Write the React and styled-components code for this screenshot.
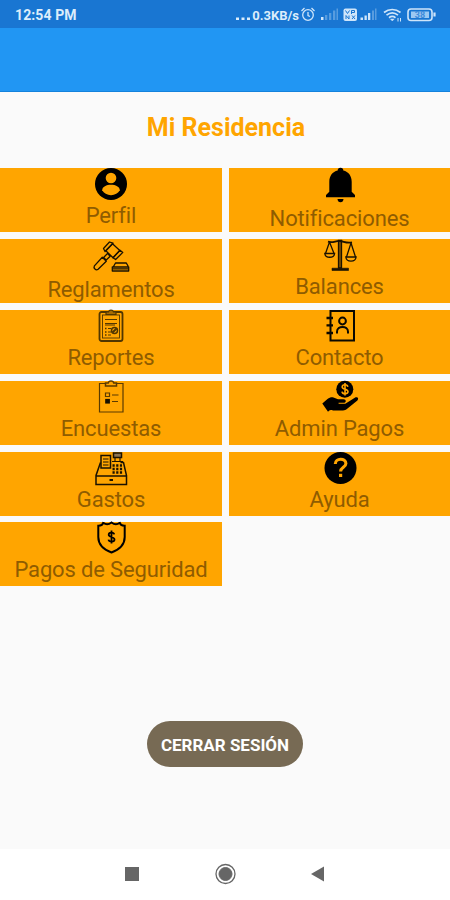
import styled, { createGlobalStyle } from "styled-components";

const GlobalStyle = createGlobalStyle`
  body {
    margin: 0;
    background-color: #fafafa;
    font-family: Roboto, "Liberation Sans", sans-serif;
  }
`;

const Screen = styled.div`
  box-sizing: border-box;
  display: flex;
  flex-direction: column;
  width: 450px;
  height: 900px;
  overflow: hidden;
`;

const StatusBar = styled.header`
  box-sizing: border-box;
  display: flex;
  align-items: center;
  justify-content: space-between;
  height: 28px;
  padding: 2px 13px 0 15px;
  background-color: #1976d2;
  color: #dcedfb;
`;

const Clock = styled.span`
  font-size: 14px;
  font-weight: 700;
  letter-spacing: 0.1px;
`;

const StatusIcons = styled.div`
  display: flex;
  align-items: center;
`;

const NetSpeed = styled.span`
  font-size: 13px;
  font-weight: 700;
`;

const Toolbar = styled.div`
  box-sizing: border-box;
  height: 64px;
  background-color: #2196f3;
  border-bottom: 1px solid #1482dc;
`;

const Title = styled.h1`
  margin: 20px 0 24px;
  padding-left: 2px;
  color: #ffa500;
  font-size: 25px;
  font-weight: 700;
  line-height: 32px;
  text-align: center;
`;

const Grid = styled.main`
  display: grid;
  grid-template-columns: 222px 221px;
  grid-auto-rows: 64px;
  gap: 6.9px 7px;
`;

const Tile = styled.button`
  display: flex;
  flex-direction: column;
  align-items: center;
  padding: 0;
  border: none;
  background-color: #ffa500;
  font-family: inherit;
`;

const TileIcon = styled.svg`
  flex: none;
  display: block;
  width: 40px;
  height: ${(props) => (props.$tall ? "37px" : "34px")};
  fill: none;
  stroke: #1a1200;
  stroke-width: 1.5;
  overflow: visible;
`;

const TileLabel = styled.span`
  color: #8f5c00;
  font-size: 22px;
  line-height: 27px;
  letter-spacing: -0.15px;
  white-space: nowrap;
`;

const Actions = styled.div`
  display: flex;
  justify-content: center;
  margin-top: 134.5px;
`;

const LogoutButton = styled.button`
  width: 156px;
  height: 46px;
  padding: 2px 0 0;
  border: none;
  border-radius: 23px;
  background-color: #776a54;
  color: #ffffff;
  font-family: inherit;
  font-size: 17px;
  font-weight: 700;
  white-space: nowrap;
`;

const NavBar = styled.footer`
  display: flex;
  align-items: center;
  justify-content: space-between;
  box-sizing: border-box;
  height: 51px;
  margin-top: auto;
  padding: 0 125px 2px;
  background-color: #ffffff;
`;

const IconProfile = () => (
  <g fill="#ffa500" stroke="none">
    <circle cx="20" cy="16" r="16" fill="#000" />
    <circle cx="20" cy="10" r="5.3" />
    <path d="M11.2 22.3c0-3.8 4.4-5.6 8.8-5.6s8.8 1.8 8.8 5.6c-1.5 3-5 4.9-8.8 4.9s-7.300-1.900-8.800-4.900Z" />
  </g>
);

const IconBell = () => (
  <g fill="#000" stroke="none">
    <path d="M17.7 2.5a2.8 2.8 0 0 1 5.6 0c5.2 1.200 8.400 5.400 8.400 11.200v10l3.300 3.200v2.300H6v-2.300l3.300-3.200v-10c0-5.800 3.200-10 8.400-11.200Z" />
    <path d="M17.500 31h6c0 2-1.300 3.300-3 3.300s-3-1.300-3-3.300Z" />
  </g>
);

const IconGavel = () => (
  <g strokeWidth="1.3" strokeLinejoin="round">
    <path d="m12.5 9.500 6-6.500 3.500 1.200-8 8.300Z" />
    <path d="m14.800 11.700 6.700-7 7.300 6.800-6.800 7.200Z" />
    <path d="m22 18.700 7-7.500 2.800 2.200-7.200 7.100Z" />
    <path d="m16.500 14.500 2.700 2.700-4 3.800-2.600-2.500Z" />
    <path d="m11.300 18.300 4 3.900-8.200 8.100c-2.200 1.500-5-1-3.700-3.400Z" />
    <path d="M22.500 27.500 24.500 24h10.800l2 3.500M21.300 28h16.400v4H21.300ZM22 29.800h15" />
  </g>
);

const IconScale = () => (
  <g strokeWidth="1.3">
    <path d="M18.500 1.500h3V29h-3Z" fill="#7a4f00" />
    <path d="M12 29.200h16.500v2.300H12Z" fill="#1a1200" strokeWidth=".6" />
    <path d="M8 2.700c5 1.500 8-1.200 12-.7s7 2.600 12 1.300" strokeWidth="1.8" />
    <path d="m9.500 3-4 11.500M9.500 3l4.500 11.500M31 4l-4.500 14M31 4l4.500 14" />
    <path d="M4.800 14.500h9.800c-.5 5-9.300 5-9.800 0ZM25.800 18h10.300c-.6 5.500-9.700 5.500-10.300 0Z" />
  </g>
);

const IconReport = () => (
  <g stroke="#513600" strokeWidth="1.2">
    <rect x="8.5" y="2" width="23" height="29" rx="2" strokeWidth="1.8" />
    <rect x="11.5" y="5" width="17" height="23" strokeWidth=".9" />
    <path d="M15 4.500V2h2.500c.5-2.400 4.500-2.400 5 0H25v2.500Z" fill="#a66b00" />
    <path d="M14 9.500h12M14 13.500h12M14 15h10M17 18.500h3M17 22h3M17 25h3" />
    <path d="M14 18.500h1.500M14 22h1.500M14 25h1.500" strokeWidth="1.6" />
    <circle cx="23.5" cy="20.5" r="3" strokeWidth="1.5" />
    <path d="m21.500 22.500 4-4" strokeWidth="2" />
  </g>
);

const IconSurvey = () => (
  <g stroke="#5b3b00" strokeWidth="1.2">
    <path d="M14.500 2.500h-6V31h23.500V2.500h-6" />
    <path d="M14.500 2v3h11V2h-2.700c-.6-2.700-5-2.700-5.600 0Z" strokeWidth="1.5" />
    <path d="M14.500 12h4v3.500h-4ZM21 14h6.500M21 20.500h6" />
    <rect x="14.8" y="18.5" width="3.5" height="3.5" fill="#1a1200" stroke="#1a1200" />
  </g>
);

const IconContact = () => (
  <g stroke="#0c0900" strokeWidth="2">
    <path d="M10.500 1h23.500v29.500H10.500Z" />
    <path d="M6.500 8H13M6.500 15.300H13M6.500 23H13" strokeWidth="2.3" />
    <circle cx="22.5" cy="11" r="3.4" />
    <path d="M17 23.500v-1.800c0-6.300 11-6.300 11 0v1.800" />
  </g>
);

const IconPayment = () => (
  <g fill="#000" stroke="none">
    <circle cx="24.8" cy="8.3" r="8.5" />
    <path
      d="M27.800 5.800c-.4-2.800-5.600-2.600-5.600.1 0 3 5.800 1.700 5.800 4.700 0 3-5.600 3-6 .1M25 2v12.600"
      fill="none"
      stroke="#ffa500"
      strokeWidth="1.6"
    />
    <path d="M2.300 22.500 7.500 18c2-1.500 4-2 6-1.500l4.500 1.700h5.500c3 0 3 3.600.1 3.600h-5v.9h6.700l9.500-6c2.500-1.500 4.500.8 2.600 2.700l-10.200 8.300c-1.300 1.200-2.500 1.700-4.200 1.700h-10c-1.800-.4-3-.5-4 .4l-1 .9Z" />
  </g>
);

const IconRegister = () => (
  <g strokeWidth="1.5">
    <path d="M9.500 10.500 5 23.500v9h30.500v-9L32.500 10.500h-3M5 24h30.500" />
    <path d="M10 16V3.500h9.500V16Z" />
    <path d="M12 7h5.500M12 10h5.500M12 13h5.500M21 9.500h11M24 6v3.500M29 6v3.500" strokeWidth="1.1" />
    <path d="M22.500 1h8v4.500h-8Z" fill="#8d7550" />
    <path d="M21.500 13.500h9.500M21.500 17h10M21.500 20.500h10" strokeWidth="2.3" strokeDasharray="2.2 1.5" />
    <path d="M18.500 28h3.500" strokeWidth="2" />
  </g>
);

const IconShield = () => (
  <g stroke="#000" strokeWidth="2">
    <path d="M12.500 0C12 2.500 10 3.800 7.300 3.800V15c0 7.500 5.200 12.500 13.200 15.500 8-3 13.200-8 13.200-15.500V3.800C31 3.800 29 2.500 28.500 0M12.500 1c2.500 1.800 5 1.800 8-.5 3 2.300 5.500 2.300 8 .5" />
    <path
      d="M23.200 12.400c-.4-2.500-5.500-2.300-5.500.3 0 2.800 5.800 1.800 5.800 4.700 0 2.800-5.500 2.800-6 .2M20.500 8.500v13"
      strokeWidth="1.8"
    />
  </g>
);

const IconHelp = () => (
  <>
    <circle cx="20.5" cy="16" r="16" fill="#000" stroke="none" />
    <path
      d="M15.300 12c0-6.300 10.600-6.300 10.600-.5 0 3.800-5.300 3.800-5.300 8"
      stroke="#ffa500"
      strokeWidth="3.1"
    />
    <rect x="19" y="21.8" width="3.2" height="3.2" fill="#ffa500" stroke="none" />
  </>
);

const menuItems = [
  { label: "Perfil", Icon: IconProfile },
  { label: "Notificaciones", Icon: IconBell, tall: true },
  { label: "Reglamentos", Icon: IconGavel, tall: true },
  { label: "Balances", Icon: IconScale },
  { label: "Reportes", Icon: IconReport },
  { label: "Contacto", Icon: IconContact },
  { label: "Encuestas", Icon: IconSurvey },
  { label: "Admin Pagos", Icon: IconPayment },
  { label: "Gastos", Icon: IconRegister },
  { label: "Ayuda", Icon: IconHelp },
  { label: "Pagos de Seguridad", Icon: IconShield },
];

const StatusGlyphs = () => (
  <svg width="138" height="20" viewBox="299 5 138 20" fill="none" stroke="#cfe5fa">
    <g strokeWidth="1.3">
      <circle cx="308" cy="15" r="5.3" />
      <path d="M308 12v3.500l2 1M301.500 11l3-3M314.500 11l-3-3" />
    </g>
    <g fill="#cfe5fa" stroke="none">
      <path d="M321 17h2.500v3H321Z" />
      <path d="M325 15h2.300v5H325ZM329 13h2.300v7H329ZM333 10.500h2.300V20H333ZM336.500 8.500h1.500V20h-1.500Z" opacity=".35" />
      <rect x="343.5" y="8.5" width="13.5" height="12.5" rx="2" />
      <path d="M360.500 17.500h2.500V20h-2.500ZM364.500 15.500h2.300V20h-2.300ZM368 13h2.300v7H368Z" />
      <path d="M372 10.500h2V20h-2ZM375 8.500h1.500V20H375Z" opacity=".35" />
    </g>
    <path d="m345.500 10.500 2 3 2-3M351.500 14v-3.500h3v2h-3M346 19v-3.500l3 3.500v-3.500M352 15.500l3 3.500M355 15.500l-3 3.500" stroke="#1976d2" />
    <g strokeWidth="1.7">
      <path d="M384 12.500c5-4 11.500-4 16.500 0M386.500 15.200c3.500-2.800 8-2.800 11.500 0M389 17.700c2-1.500 4.500-1.500 6.500 0" />
      <path d="m390.500 19 1.800 2 1.800-2Z" fill="#cfe5fa" strokeWidth=".5" />
      <path d="M398 18v3.500M400.500 18v3.500" strokeWidth="1" />
    </g>
    <rect x="408" y="9" width="24" height="11.5" rx="3" strokeWidth="1.6" />
    <rect x="411" y="11.5" width="18" height="6.5" fill="#9cc8f2" stroke="none" />
    <path d="M434.500 12.500v4" strokeWidth="2.2" />
    <text x="420" y="18" textAnchor="middle" fontSize="9" fontWeight="700" fill="#3f8bda" stroke="none">
      38
    </text>
  </svg>
);

const App = () => (
  <>
    <GlobalStyle />
    <Screen>
      <StatusBar>
        <Clock>12:54 PM</Clock>
        <StatusIcons>
          <svg width="17" height="16" fill="#dcedfb">
            <path d="M1 10.500h3v2.500H1ZM6.500 10.500h3v2.500h-3ZM12 10.500h3v2.500h-3Z" />
          </svg>
          <NetSpeed>0.3KB/s</NetSpeed>
          <StatusGlyphs />
        </StatusIcons>
      </StatusBar>
      <Toolbar />
      <Title>Mi Residencia</Title>
      <Grid>
        {menuItems.map(({ label, Icon, tall }) => (
          <Tile key={label}>
            <TileIcon $tall={tall} viewBox={tall ? "0 0 40 37" : "0 0 40 34"}>
              <Icon />
            </TileIcon>
            <TileLabel>{label}</TileLabel>
          </Tile>
        ))}
      </Grid>
      <Actions>
        <LogoutButton>CERRAR SESIÓN</LogoutButton>
      </Actions>
      <NavBar>
        <svg width="14" height="14" fill="#666">
          <rect width="14" height="14" />
        </svg>
        <svg width="22" height="22" fill="none" stroke="#666">
          <circle cx="11.5" cy="11" r="9.5" strokeWidth="1.3" />
          <circle cx="11.5" cy="11" r="6.5" fill="#666" />
        </svg>
        <svg width="14" height="16" fill="#666">
          <path d="M13 .5v15L0 8Z" />
        </svg>
      </NavBar>
    </Screen>
  </>
);

export default App;
